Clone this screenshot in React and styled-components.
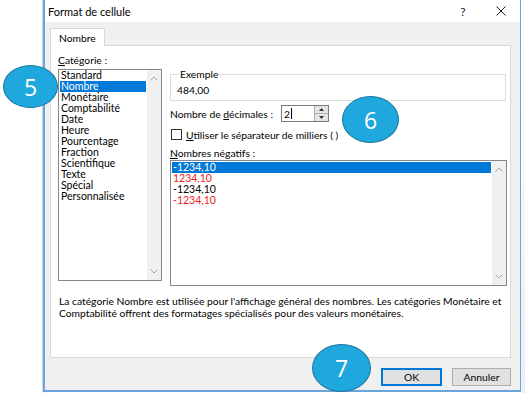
import React from "react";
import styled, { createGlobalStyle } from "styled-components";

const GlobalStyle = createGlobalStyle`
  html, body {
    margin: 0;
    padding: 0;
    background: #ffffff;
  }
  body {
    font-family: Lato, "Noto Sans", "Liberation Sans", sans-serif;
    font-size: 10.3px;
    color: #000000;
  }
`;

const Page = styled.div`
  position: relative;
  width: 525px;
  height: 393px;
  overflow: hidden;
  display: flex;
  background: #ffffff;
`;

const Sheet = styled.div`
  width: 42px;
  height: 100%;
  border-right: 1px solid #d6d6d6;
  flex-shrink: 0;
`;

const Dialog = styled.div`
  width: 478px;
  height: 392px;
  box-sizing: border-box;
  border-left: 2px solid #6aa6dc;
  border-right: 1px solid #6aa6dc;
  border-bottom: 2px solid #6aa6dc;
  display: flex;
  flex-direction: column;
  flex-shrink: 0;
`;

const Behind = styled.div`
  flex: 1;
  background: linear-gradient(#ffffff, #e9eef5);
`;

const TitleBar = styled.div`
  height: 22px;
  display: flex;
  align-items: center;
  padding-left: 3px;
  background: #ffffff;
  font-size: 11px;
`;

const Title = styled.div`
  flex: 1;
`;

const TitleButton = styled.div`
  width: 38px;
  display: flex;
  justify-content: center;
  align-items: center;
  font-size: 12px;
  color: #222;
`;

const Body = styled.div`
  flex: 1;
  background: #f0f0f0;
  padding: 6px 9px 0 5px;
  display: flex;
  flex-direction: column;
`;

const TabRow = styled.div`
  display: flex;
`;

const Tab = styled.div`
  height: 17px;
  padding: 0 8px;
  display: flex;
  align-items: center;
  background: #ffffff;
  border: 1px solid #d9d9d9;
  border-bottom: none;
  margin-bottom: -1px;
  position: relative;
  z-index: 1;
`;

const Panel = styled.div`
  height: 313px;
  box-sizing: border-box;
  background: #ffffff;
  border: 1px solid #d9d9d9;
  padding: 8px 3px 0 7px;
  display: flex;
  flex-direction: column;
`;

const Columns = styled.div`
  display: grid;
  grid-template-columns: 104px 1fr;
  column-gap: 8px;
`;

const Column = styled.div`
  display: flex;
  flex-direction: column;
`;

const Label = styled.div`
  height: 12px;
  line-height: 12px;
  white-space: nowrap;
  margin-top: ${(p) => p.$mt || 0}px;
`;

const Key = styled.span`
  text-decoration: underline;
`;

const ListBox = styled.div`
  height: ${(p) => p.$h}px;
  box-sizing: border-box;
  border: 1px solid #828790;
  margin-top: ${(p) => p.$mt || 0}px;
  display: flex;
  background: #ffffff;
`;

const Items = styled.div`
  flex: 1;
  padding: ${(p) => p.$pt || 0}px 1px 0 1px;
`;

const Item = styled.div`
  height: 11px;
  line-height: 11px;
  padding-left: 1px;
  white-space: nowrap;
  font-size: 10.5px;
  background: ${(p) => (p.$selected ? "#0078d7" : "transparent")};
  color: ${(p) => (p.$selected ? "#ffffff" : p.$red ? "#ee1c25" : "#000000")};
`;

const ScrollBar = styled.div`
  width: 14px;
  background: #f0f0f0;
  display: flex;
  flex-direction: column;
  justify-content: space-between;
  align-items: center;
  padding: 6px 0;
`;

const Group = styled.fieldset`
  margin: 14px 1px 0 0;
  padding: 0 6px;
  min-width: 0;
  height: 33px;
  box-sizing: border-box;
  border: 1px solid #dcdcdc;
`;

const Legend = styled.legend`
  padding: 0 1px;
  margin-left: 2px;
  height: 12px;
  line-height: 12px;
`;

const Sample = styled.div`
  padding-top: 4px;
  line-height: 12px;
`;

const Row = styled.div`
  display: flex;
  align-items: center;
  white-space: nowrap;
  margin-top: ${(p) => p.$mt || 0}px;
  height: ${(p) => p.$h}px;
`;

const SpinInput = styled.div`
  margin-left: 8px;
  width: 48px;
  height: 17px;
  box-sizing: border-box;
  border: 1px solid #7a7a7a;
  display: flex;
  background: #ffffff;
`;

const SpinText = styled.div`
  flex: 1;
  padding-left: 2px;
  display: flex;
  align-items: center;
`;

const Caret = styled.span`
  width: 1px;
  height: 11px;
  background: #000;
  margin-left: 1px;
`;

const SpinButtons = styled.div`
  width: 13px;
  display: flex;
  flex-direction: column;
  border-left: 1px solid #adadad;
`;

const SpinBtn = styled.div`
  flex: 1;
  display: flex;
  align-items: center;
  justify-content: center;
  background: #e5e5e5;
  border-top: ${(p) => (p.$lower ? "1px solid #adadad" : "none")};
`;

const Box = styled.div`
  width: 11px;
  height: 11px;
  box-sizing: border-box;
  border: 1px solid #333333;
  margin: 0 4px 0 1px;
  background: #ffffff;
`;

const Description = styled.div`
  margin-top: 9px;
  padding-left: 1px;
  line-height: 12px;
  white-space: nowrap;
`;

const Buttons = styled.div`
  display: flex;
  justify-content: flex-end;
  gap: 10px;
  margin-top: 10px;
`;

const Button = styled.div`
  width: ${(p) => p.$w}px;
  height: 18px;
  box-sizing: border-box;
  border: 1px solid ${(p) => (p.$primary ? "#0078d7" : "#adadad")};
  box-shadow: ${(p) => (p.$primary ? "inset 0 0 0 1px #0078d7" : "none")};
  background: #e1e1e1;
  display: flex;
  align-items: center;
  justify-content: center;
`;

const Callout = styled.div`
  position: absolute;
  left: ${(p) => p.$x}px;
  top: ${(p) => p.$y}px;
  width: ${(p) => p.$w}px;
  height: ${(p) => p.$h}px;
  box-sizing: border-box;
  border-radius: 50%;
  background: #1fa8de;
  border: 1.5px solid #1a76a0;
  color: #ffffff;
  font-family: "Open Sans", sans-serif;
  font-size: 23px;
  display: flex;
  align-items: center;
  justify-content: center;
  z-index: 5;
`;

const Chevron = ({ down }) => (
  <svg width="8" height="5" viewBox="0 0 8 5">
    <polyline
      points={down ? "0.5,0.5 4,4 7.5,0.5" : "0.5,4.5 4,1 7.5,4.5"}
      fill="none"
      stroke="#a6a6a6"
      strokeWidth="1"
    />
  </svg>
);

const Triangle = ({ down }) => (
  <svg width="5" height="3" viewBox="0 0 5 3">
    <polygon points={down ? "0,0 5,0 2.5,3" : "0,3 5,3 2.5,0"} fill="#333" />
  </svg>
);

const categories = [
  "Standard",
  "Nombre",
  "Monétaire",
  "Comptabilité",
  "Date",
  "Heure",
  "Pourcentage",
  "Fraction",
  "Scientifique",
  "Texte",
  "Spécial",
  "Personnalisée",
];

const negatives = [
  { text: "-1234,10", selected: true },
  { text: "1234,10", red: true },
  { text: "-1234,10" },
  { text: "-1234,10", red: true },
];

const App = () => {
  return (
    <Page>
      <GlobalStyle />
      <Sheet />
      <Dialog>
        <TitleBar>
          <Title>Format de cellule</Title>
          <TitleButton>?</TitleButton>
          <TitleButton>
            <svg width="10" height="10" viewBox="0 0 10 10">
              <path d="M0.5 0.5 L9.5 9.5 M9.5 0.5 L0.5 9.5" stroke="#222" strokeWidth="1" />
            </svg>
          </TitleButton>
        </TitleBar>
        <Body>
          <TabRow>
            <Tab>Nombre</Tab>
          </TabRow>
          <Panel>
            <Columns>
              <Column>
                <Label>
                  <Key>C</Key>atégorie :
                </Label>
                <ListBox $h={212} $mt={3}>
                  <Items $pt={0}>
                    {categories.map((c) => (
                      <Item key={c} $selected={c === "Nombre"}>
                        {c}
                      </Item>
                    ))}
                  </Items>
                  <ScrollBar>
                    <Chevron />
                    <Chevron down />
                  </ScrollBar>
                </ListBox>
              </Column>
              <Column>
                <Group>
                  <Legend>Exemple</Legend>
                  <Sample>484,00</Sample>
                </Group>
                <Row $mt={4} $h={17}>
                  <span>
                    Nombre de <Key>d</Key>écimales :
                  </span>
                  <SpinInput>
                    <SpinText>
                      2<Caret />
                    </SpinText>
                    <SpinButtons>
                      <SpinBtn>
                        <Triangle />
                      </SpinBtn>
                      <SpinBtn $lower>
                        <Triangle down />
                      </SpinBtn>
                    </SpinButtons>
                  </SpinInput>
                </Row>
                <Row $mt={6} $h={13}>
                  <Box />
                  <span>
                    <Key>U</Key>tiliser le séparateur de milliers ( )
                  </span>
                </Row>
                <Label $mt={6}>
                  <Key>N</Key>ombres négatifs :
                </Label>
                <ListBox $h={126} $mt={1}>
                  <Items $pt={1}>
                    {negatives.map((n, i) => (
                      <Item key={i} $selected={n.selected} $red={n.red}>
                        {n.text}
                      </Item>
                    ))}
                  </Items>
                  <ScrollBar>
                    <Chevron />
                    <Chevron down />
                  </ScrollBar>
                </ListBox>
              </Column>
            </Columns>
            <Description>
              La catégorie Nombre est utilisée pour l'affichage général des nombres. Les catégories Monétaire et
              <br />
              Comptabilité offrent des formatages spécialisés pour des valeurs monétaires.
            </Description>
          </Panel>
          <Buttons>
            <Button $w={61} $primary>
              OK
            </Button>
            <Button $w={59}>Annuler</Button>
          </Buttons>
        </Body>
      </Dialog>
      <Behind />
      <Callout $x={3} $y={65} $w={55} $h={43}>
        5
      </Callout>
      <Callout $x={342} $y={96} $w={57} $h={47}>
        6
      </Callout>
      <Callout $x={312} $y={344} $w={59} $h={48}>
        7
      </Callout>
    </Page>
  );
};

export default App;
